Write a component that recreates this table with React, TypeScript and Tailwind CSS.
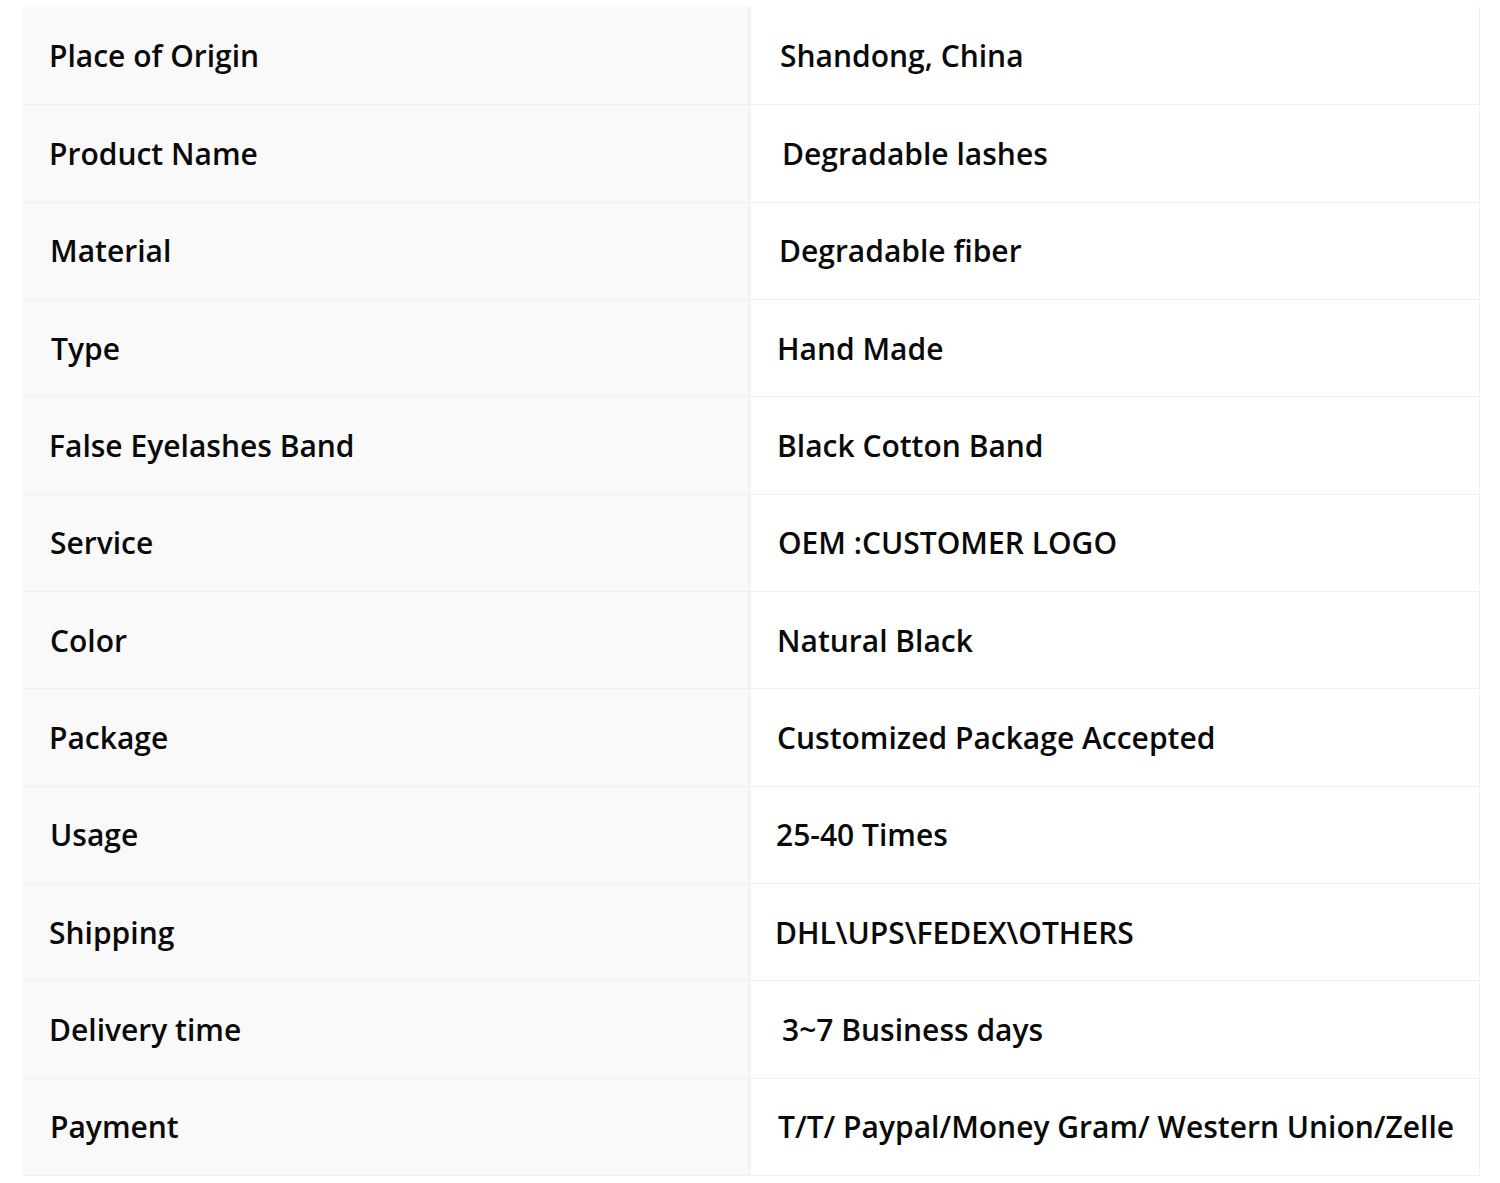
const ROWS = [
  { label: "Place of Origin", value: "Shandong, China", l: "pl-[26px]", r: "pl-[29px]" },
  { label: "Product Name", value: "Degradable lashes", l: "pl-[26px]", r: "pl-[31px]" },
  { label: "Material", value: "Degradable fiber", l: "pl-[27px]", r: "pl-[28px]" },
  { label: "Type", value: "Hand Made", l: "pl-[28px]", r: "pl-[26px]" },
  { label: "False Eyelashes Band", value: "Black Cotton Band", l: "pl-[26px]", r: "pl-[26px]" },
  { label: "Service", value: "OEM :CUSTOMER LOGO", l: "pl-[27px]", r: "pl-[27px]" },
  { label: "Color", value: "Natural Black", l: "pl-[27px]", r: "pl-[26px]" },
  { label: "Package", value: "Customized Package Accepted", l: "pl-[26px]", r: "pl-[26px]" },
  { label: "Usage", value: "25-40 Times", l: "pl-[27px]", r: "pl-[25px]" },
  { label: "Shipping", value: "DHL\\UPS\\FEDEX\\OTHERS", l: "pl-[26px]", r: "pl-[24px]" },
  { label: "Delivery time", value: "3~7 Business days", l: "pl-[26px]", r: "pl-[31px]" },
  { label: "Payment", value: "T/T/ Paypal/Money Gram/ Western Union/Zelle", l: "pl-[27px]", r: "pl-[27px]" },
];

export default function App() {
  return (
    <div className="h-[1183px] w-[1500px] bg-white pl-[23px] pt-[7px]">
      <div className="w-[1457px] border-r border-b border-[#f0f0f0] font-['Open_Sans','Noto_Sans',sans-serif] text-[30px] font-semibold text-[#0a0a0a]">
        {ROWS.map((row, i) => (
          <div
            key={row.label}
            className={`grid h-[97.33px] grid-cols-[728px_1fr] ${i > 0 ? "border-t border-[#efefef]" : ""}`}
          >
            <div className={`flex items-center border-r-[3px] border-[#f3f3f3] bg-[#f9f9f9] ${row.l}`}>
              {row.label}
            </div>
            <div className={`flex items-center bg-white ${row.r}`}>{row.value}</div>
          </div>
        ))}
      </div>
    </div>
  );
}
